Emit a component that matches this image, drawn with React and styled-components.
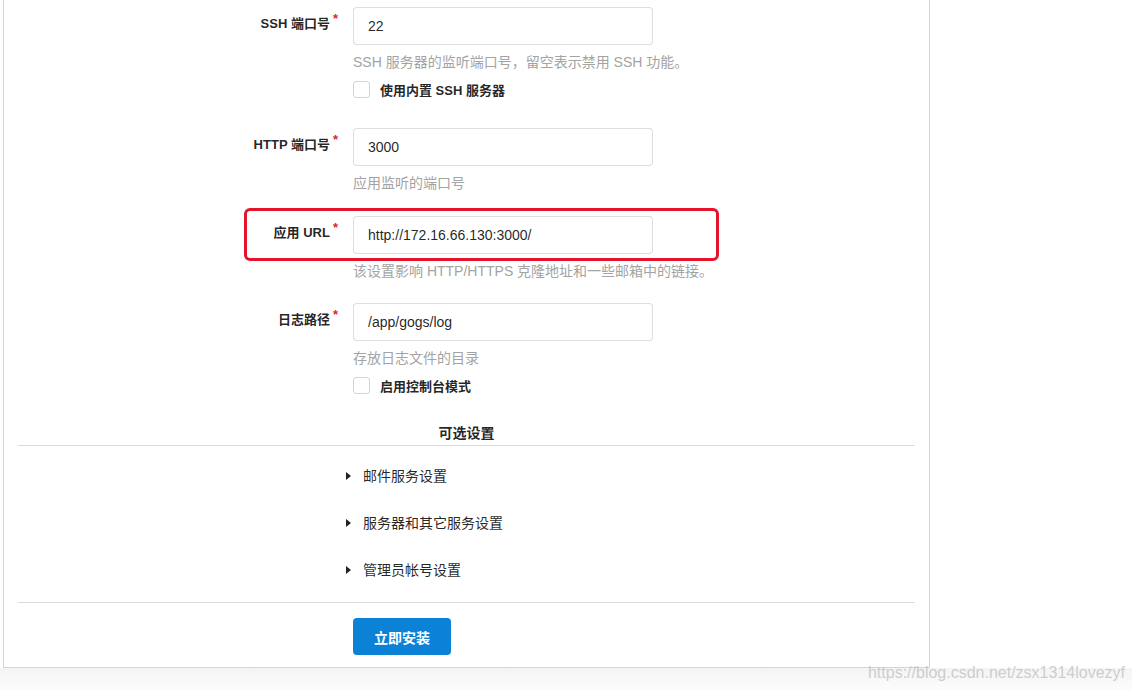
import React from 'react';
import styled, { createGlobalStyle } from 'styled-components';

const GlobalStyle = createGlobalStyle`
  body {
    margin: 0;
    background: #fff;
    font-family: "Liberation Sans", "Noto Sans CJK SC", sans-serif;
    color: rgba(0, 0, 0, 0.87);
  }
`;

const Page = styled.div`
  position: relative;
  min-height: 690px;
  display: flex;
  flex-direction: column;
`;

const Panel = styled.div`
  margin-left: 3px;
  width: 927px;
  box-sizing: border-box;
  border: 1px solid #d4d4d5;
  border-top: none;
  padding: 7px 0 12px;
  background: #fff;
`;

const Footer = styled.div`
  flex: 1;
  background: linear-gradient(#f4f4f4, #fcfcfc);
`;

const Watermark = styled.span`
  position: absolute;
  right: 7px;
  bottom: 8px;
  font-size: 16px;
  color: rgba(190, 190, 190, 0.75);
`;

const Field = styled.div`
  position: relative;
  display: grid;
  grid-template-columns: 334px 300px;
  column-gap: 15px;
  margin-bottom: ${({ $gap }) => $gap || 22}px;
`;

const Label = styled.label`
  display: flex;
  justify-content: flex-end;
  align-items: center;
  height: 38px;
  padding-bottom: 4px;
  box-sizing: border-box;
  line-height: 20px;
  font-size: 13px;
  font-weight: bold;
  color: rgba(0, 0, 0, 0.87);
`;

const Star = styled.span`
  position: relative;
  top: -5px;
  margin-left: 3px;
  color: #db2828;
  font-size: 13px;
`;

const Input = styled.input`
  width: 300px;
  height: 38px;
  box-sizing: border-box;
  border: 1px solid rgba(34, 36, 38, 0.15);
  border-radius: 4px;
  padding: 0 14px;
  font: 14px "Liberation Sans", "Noto Sans CJK SC", sans-serif;
  color: rgba(0, 0, 0, 0.87);
  outline: none;
`;

const Help = styled.div`
  margin-top: 7px;
  line-height: 20px;
  font-size: 14px;
  color: #a3a3a3;
  white-space: nowrap;
`;

const CheckRow = styled.label`
  display: flex;
  align-items: center;
  gap: 10px;
  height: 20px;
  margin: 8px 0 6px;
  padding-bottom: 2px;
  box-sizing: border-box;
  font-size: 13px;
  font-weight: bold;
  color: rgba(0, 0, 0, 0.87);
  white-space: nowrap;
`;

const Box = styled.span`
  width: 17px;
  height: 17px;
  box-sizing: border-box;
  border: 1px solid #d4d4d5;
  border-radius: 3px;
  background: #fff;
`;

const Highlight = styled.div`
  position: absolute;
  left: 240px;
  top: -8px;
  width: 475px;
  height: 53px;
  box-sizing: border-box;
  border: 3px solid #e3142c;
  border-radius: 6px;
  pointer-events: none;
`;

const SectionTitle = styled.h4`
  margin: 0 14px;
  padding-bottom: 2px;
  border-bottom: 1px solid #dcdcdc;
  text-align: center;
  font-size: 14px;
  font-weight: bold;
  line-height: 20px;
`;

const Collapsibles = styled.div`
  display: flex;
  flex-direction: column;
  gap: 27px;
  margin: 0 14px;
  padding: 20px 0 22px 328px;
  border-bottom: 1px solid #dcdcdc;
`;

const Summary = styled.div`
  display: flex;
  align-items: center;
  gap: 12px;
  line-height: 20px;
  font-size: 14px;
  color: rgba(0, 0, 0, 0.87);
`;

const Actions = styled.div`
  padding: 15px 0 0 349px;
`;

const Button = styled.button`
  width: 98px;
  height: 37px;
  border: none;
  border-radius: 4px;
  background: #0b82d6;
  color: #fff;
  font: bold 14px "Liberation Sans", "Noto Sans CJK SC", sans-serif;
  cursor: pointer;
`;

const Caret = () => (
  <svg width="5" height="8" viewBox="0 0 5 8">
    <path d="M0 0 L5 4 L0 8 Z" fill="#222" />
  </svg>
);

const fields = [
  { label: 'SSH 端口号', value: '22', help: 'SSH 服务器的监听端口号，留空表示禁用 SSH 功能。', check: '使用内置 SSH 服务器' },
  { label: 'HTTP 端口号', value: '3000', help: '应用监听的端口号', gap: 23 },
  { label: '应用 URL', value: 'http://172.16.66.130:3000/', help: '该设置影响 HTTP/HTTPS 克隆地址和一些邮箱中的链接。', marked: true },
  { label: '日志路径', value: '/app/gogs/log', help: '存放日志文件的目录', check: '启用控制台模式', gap: 21 },
];

const sections = ['邮件服务设置', '服务器和其它服务设置', '管理员帐号设置'];

export default function App() {
  return (
    <Page>
      <GlobalStyle />
      <Panel>
        {fields.map((f) => (
          <Field key={f.label} $gap={f.gap}>
            <Label>
              {f.label}
              <Star>*</Star>
            </Label>
            <div>
              <Input defaultValue={f.value} />
              <Help>{f.help}</Help>
              {f.check && (
                <CheckRow>
                  <Box />
                  {f.check}
                </CheckRow>
              )}
            </div>
            {f.marked && <Highlight />}
          </Field>
        ))}
        <SectionTitle>可选设置</SectionTitle>
        <Collapsibles>
          {sections.map((s) => (
            <Summary key={s}>
              <Caret />
              {s}
            </Summary>
          ))}
        </Collapsibles>
        <Actions>
          <Button>立即安装</Button>
        </Actions>
      </Panel>
      <Footer />
      <Watermark>https://blog.csdn.net/zsx1314lovezyf</Watermark>
    </Page>
  );
}
